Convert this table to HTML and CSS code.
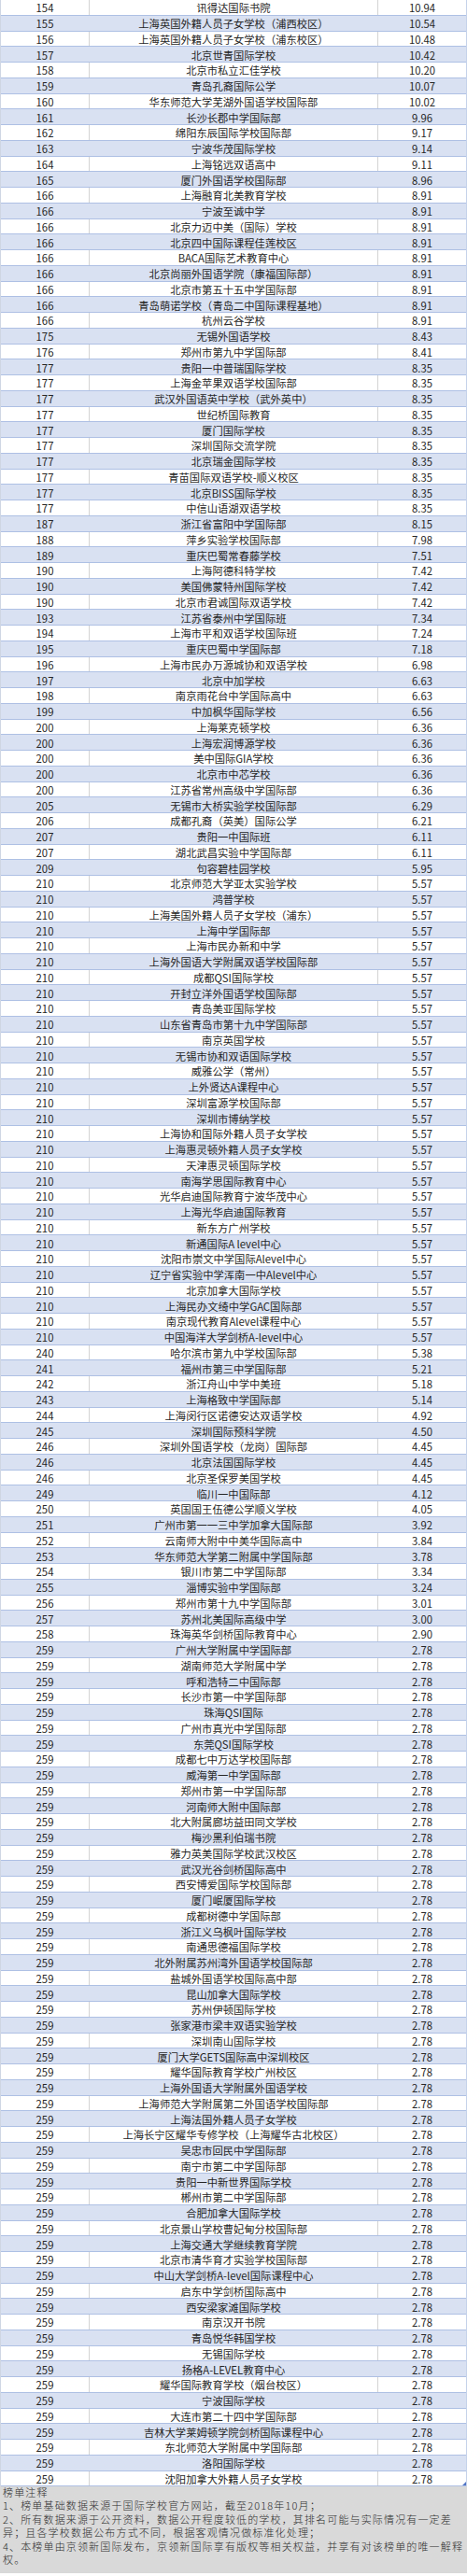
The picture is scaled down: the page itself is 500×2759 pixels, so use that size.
FILE: index.html
```html
<!DOCTYPE html>
<html lang="zh-CN">
<head>
<meta charset="utf-8">
<title>国际学校排名</title>
<link rel="stylesheet" href="styles.css">
</head>
<body>
<div class="board">
<div class="rank-table">
<div class="r"><span>154</span><span>讯得达国际书院</span><span>10.94</span></div>
<div class="r"><span>155</span><span>上海英国外籍人员子女学校（浦西校区）</span><span>10.54</span></div>
<div class="r"><span>156</span><span>上海英国外籍人员子女学校（浦东校区）</span><span>10.48</span></div>
<div class="r"><span>157</span><span>北京世青国际学校</span><span>10.42</span></div>
<div class="r"><span>158</span><span>北京市私立汇佳学校</span><span>10.20</span></div>
<div class="r"><span>159</span><span>青岛孔裔国际公学</span><span>10.07</span></div>
<div class="r"><span>160</span><span>华东师范大学芜湖外国语学校国际部</span><span>10.02</span></div>
<div class="r"><span>161</span><span>长沙长郡中学国际部</span><span>9.96</span></div>
<div class="r"><span>162</span><span>绵阳东辰国际学校国际部</span><span>9.17</span></div>
<div class="r"><span>163</span><span>宁波华茂国际学校</span><span>9.14</span></div>
<div class="r"><span>164</span><span>上海铭远双语高中</span><span>9.11</span></div>
<div class="r"><span>165</span><span>厦门外国语学校国际部</span><span>8.96</span></div>
<div class="r"><span>166</span><span>上海融育北美教育学校</span><span>8.91</span></div>
<div class="r"><span>166</span><span>宁波至诚中学</span><span>8.91</span></div>
<div class="r"><span>166</span><span>北京力迈中美（国际）学校</span><span>8.91</span></div>
<div class="r"><span>166</span><span>北京四中国际课程佳莲校区</span><span>8.91</span></div>
<div class="r"><span>166</span><span>BACA国际艺术教育中心</span><span>8.91</span></div>
<div class="r"><span>166</span><span>北京尚丽外国语学院（康福国际部）</span><span>8.91</span></div>
<div class="r"><span>166</span><span>北京市第五十五中学国际部</span><span>8.91</span></div>
<div class="r"><span>166</span><span>青岛萌诺学校（青岛二中国际课程基地）</span><span>8.91</span></div>
<div class="r"><span>166</span><span>杭州云谷学校</span><span>8.91</span></div>
<div class="r"><span>175</span><span>无锡外国语学校</span><span>8.43</span></div>
<div class="r"><span>176</span><span>郑州市第九中学国际部</span><span>8.41</span></div>
<div class="r"><span>177</span><span>贵阳一中普瑞国际学校</span><span>8.35</span></div>
<div class="r"><span>177</span><span>上海金苹果双语学校国际部</span><span>8.35</span></div>
<div class="r"><span>177</span><span>武汉外国语英中学校（武外英中）</span><span>8.35</span></div>
<div class="r"><span>177</span><span>世纪桥国际教育</span><span>8.35</span></div>
<div class="r"><span>177</span><span>厦门国际学校</span><span>8.35</span></div>
<div class="r"><span>177</span><span>深圳国际交流学院</span><span>8.35</span></div>
<div class="r"><span>177</span><span>北京瑞金国际学校</span><span>8.35</span></div>
<div class="r"><span>177</span><span>青苗国际双语学校-顺义校区</span><span>8.35</span></div>
<div class="r"><span>177</span><span>北京BISS国际学校</span><span>8.35</span></div>
<div class="r"><span>177</span><span>中信山语湖双语学校</span><span>8.35</span></div>
<div class="r"><span>187</span><span>浙江省富阳中学国际部</span><span>8.15</span></div>
<div class="r"><span>188</span><span>萍乡实验学校国际部</span><span>7.98</span></div>
<div class="r"><span>189</span><span>重庆巴蜀常春藤学校</span><span>7.51</span></div>
<div class="r"><span>190</span><span>上海阿德科特学校</span><span>7.42</span></div>
<div class="r"><span>190</span><span>美国佛蒙特州国际学校</span><span>7.42</span></div>
<div class="r"><span>190</span><span>北京市君诚国际双语学校</span><span>7.42</span></div>
<div class="r"><span>193</span><span>江苏省泰州中学国际班</span><span>7.34</span></div>
<div class="r"><span>194</span><span>上海市平和双语学校国际班</span><span>7.24</span></div>
<div class="r"><span>195</span><span>重庆巴蜀中学国际部</span><span>7.18</span></div>
<div class="r"><span>196</span><span>上海市民办万源城协和双语学校</span><span>6.98</span></div>
<div class="r"><span>197</span><span>北京中加学校</span><span>6.63</span></div>
<div class="r"><span>198</span><span>南京雨花台中学国际高中</span><span>6.63</span></div>
<div class="r"><span>199</span><span>中加枫华国际学校</span><span>6.56</span></div>
<div class="r"><span>200</span><span>上海莱克顿学校</span><span>6.36</span></div>
<div class="r"><span>200</span><span>上海宏润博源学校</span><span>6.36</span></div>
<div class="r"><span>200</span><span>美中国际GIA学校</span><span>6.36</span></div>
<div class="r"><span>200</span><span>北京市中芯学校</span><span>6.36</span></div>
<div class="r"><span>200</span><span>江苏省常州高级中学国际部</span><span>6.36</span></div>
<div class="r"><span>205</span><span>无锡市大桥实验学校国际部</span><span>6.29</span></div>
<div class="r"><span>206</span><span>成都孔裔（英美）国际公学</span><span>6.21</span></div>
<div class="r"><span>207</span><span>贵阳一中国际班</span><span>6.11</span></div>
<div class="r"><span>207</span><span>湖北武昌实验中学国际部</span><span>6.11</span></div>
<div class="r"><span>209</span><span>句容碧桂园学校</span><span>5.95</span></div>
<div class="r"><span>210</span><span>北京师范大学亚太实验学校</span><span>5.57</span></div>
<div class="r"><span>210</span><span>鸿普学校</span><span>5.57</span></div>
<div class="r"><span>210</span><span>上海美国外籍人员子女学校（浦东）</span><span>5.57</span></div>
<div class="r"><span>210</span><span>上海中学国际部</span><span>5.57</span></div>
<div class="r"><span>210</span><span>上海市民办新和中学</span><span>5.57</span></div>
<div class="r"><span>210</span><span>上海外国语大学附属双语学校国际部</span><span>5.57</span></div>
<div class="r"><span>210</span><span>成都QSI国际学校</span><span>5.57</span></div>
<div class="r"><span>210</span><span>开封立洋外国语学校国际部</span><span>5.57</span></div>
<div class="r"><span>210</span><span>青岛美亚国际学校</span><span>5.57</span></div>
<div class="r"><span>210</span><span>山东省青岛市第十九中学国际部</span><span>5.57</span></div>
<div class="r"><span>210</span><span>南京英国学校</span><span>5.57</span></div>
<div class="r"><span>210</span><span>无锡市协和双语国际学校</span><span>5.57</span></div>
<div class="r"><span>210</span><span>威雅公学（常州）</span><span>5.57</span></div>
<div class="r"><span>210</span><span>上外贤达A课程中心</span><span>5.57</span></div>
<div class="r"><span>210</span><span>深圳富源学校国际部</span><span>5.57</span></div>
<div class="r"><span>210</span><span>深圳市博纳学校</span><span>5.57</span></div>
<div class="r"><span>210</span><span>上海协和国际外籍人员子女学校</span><span>5.57</span></div>
<div class="r"><span>210</span><span>上海惠灵顿外籍人员子女学校</span><span>5.57</span></div>
<div class="r"><span>210</span><span>天津惠灵顿国际学校</span><span>5.57</span></div>
<div class="r"><span>210</span><span>南海学思国际教育中心</span><span>5.57</span></div>
<div class="r"><span>210</span><span>光华启迪国际教育宁波华茂中心</span><span>5.57</span></div>
<div class="r"><span>210</span><span>上海光华启迪国际教育</span><span>5.57</span></div>
<div class="r"><span>210</span><span>新东方广州学校</span><span>5.57</span></div>
<div class="r"><span>210</span><span>新通国际A level中心</span><span>5.57</span></div>
<div class="r"><span>210</span><span>沈阳市崇文中学国际Alevel中心</span><span>5.57</span></div>
<div class="r"><span>210</span><span>辽宁省实验中学浑南一中Alevel中心</span><span>5.57</span></div>
<div class="r"><span>210</span><span>北京加拿大国际学校</span><span>5.57</span></div>
<div class="r"><span>210</span><span>上海民办文绮中学GAC国际部</span><span>5.57</span></div>
<div class="r"><span>210</span><span>南京现代教育Alevel课程中心</span><span>5.57</span></div>
<div class="r"><span>210</span><span>中国海洋大学剑桥A-level中心</span><span>5.57</span></div>
<div class="r"><span>240</span><span>哈尔滨市第九中学校国际部</span><span>5.38</span></div>
<div class="r"><span>241</span><span>福州市第三中学国际部</span><span>5.21</span></div>
<div class="r"><span>242</span><span>浙江舟山中学中美班</span><span>5.18</span></div>
<div class="r"><span>243</span><span>上海格致中学国际部</span><span>5.14</span></div>
<div class="r"><span>244</span><span>上海闵行区诺德安达双语学校</span><span>4.92</span></div>
<div class="r"><span>245</span><span>深圳国际预科学院</span><span>4.50</span></div>
<div class="r"><span>246</span><span>深圳外国语学校（龙岗）国际部</span><span>4.45</span></div>
<div class="r"><span>246</span><span>北京法国国际学校</span><span>4.45</span></div>
<div class="r"><span>246</span><span>北京圣保罗美国学校</span><span>4.45</span></div>
<div class="r"><span>249</span><span>临川一中国际部</span><span>4.12</span></div>
<div class="r"><span>250</span><span>英国国王伍德公学顺义学校</span><span>4.05</span></div>
<div class="r"><span>251</span><span>广州市第一一三中学加拿大国际部</span><span>3.92</span></div>
<div class="r"><span>252</span><span>云南师大附中中美华国际高中</span><span>3.84</span></div>
<div class="r"><span>253</span><span>华东师范大学第二附属中学国际部</span><span>3.78</span></div>
<div class="r"><span>254</span><span>银川市第二中学国际部</span><span>3.34</span></div>
<div class="r"><span>255</span><span>淄博实验中学国际部</span><span>3.24</span></div>
<div class="r"><span>256</span><span>郑州市第十九中学国际部</span><span>3.01</span></div>
<div class="r"><span>257</span><span>苏州北美国际高级中学</span><span>3.00</span></div>
<div class="r"><span>258</span><span>珠海英华剑桥国际教育中心</span><span>2.90</span></div>
<div class="r"><span>259</span><span>广州大学附属中学国际部</span><span>2.78</span></div>
<div class="r"><span>259</span><span>湖南师范大学附属中学</span><span>2.78</span></div>
<div class="r"><span>259</span><span>呼和浩特二中国际部</span><span>2.78</span></div>
<div class="r"><span>259</span><span>长沙市第一中学国际部</span><span>2.78</span></div>
<div class="r"><span>259</span><span>珠海QSI国际</span><span>2.78</span></div>
<div class="r"><span>259</span><span>广州市真光中学国际部</span><span>2.78</span></div>
<div class="r"><span>259</span><span>东莞QSI国际学校</span><span>2.78</span></div>
<div class="r"><span>259</span><span>成都七中万达学校国际部</span><span>2.78</span></div>
<div class="r"><span>259</span><span>威海第一中学国际部</span><span>2.78</span></div>
<div class="r"><span>259</span><span>郑州市第一中学国际部</span><span>2.78</span></div>
<div class="r"><span>259</span><span>河南师大附中国际部</span><span>2.78</span></div>
<div class="r"><span>259</span><span>北大附属廊坊益田同文学校</span><span>2.78</span></div>
<div class="r"><span>259</span><span>梅沙黑利伯瑞书院</span><span>2.78</span></div>
<div class="r"><span>259</span><span>雅力英美国际学校武汉校区</span><span>2.78</span></div>
<div class="r"><span>259</span><span>武汉光谷剑桥国际高中</span><span>2.78</span></div>
<div class="r"><span>259</span><span>西安博爱国际学校国际部</span><span>2.78</span></div>
<div class="r"><span>259</span><span>厦门岷厦国际学校</span><span>2.78</span></div>
<div class="r"><span>259</span><span>成都树德中学国际部</span><span>2.78</span></div>
<div class="r"><span>259</span><span>浙江义乌枫叶国际学校</span><span>2.78</span></div>
<div class="r"><span>259</span><span>南通思德福国际学校</span><span>2.78</span></div>
<div class="r"><span>259</span><span>北外附属苏州湾外国语学校国际部</span><span>2.78</span></div>
<div class="r"><span>259</span><span>盐城外国语学校国际高中部</span><span>2.78</span></div>
<div class="r"><span>259</span><span>昆山加拿大国际学校</span><span>2.78</span></div>
<div class="r"><span>259</span><span>苏州伊顿国际学校</span><span>2.78</span></div>
<div class="r"><span>259</span><span>张家港市梁丰双语实验学校</span><span>2.78</span></div>
<div class="r"><span>259</span><span>深圳南山国际学校</span><span>2.78</span></div>
<div class="r"><span>259</span><span>厦门大学GETS国际高中深圳校区</span><span>2.78</span></div>
<div class="r"><span>259</span><span>耀华国际教育学校广州校区</span><span>2.78</span></div>
<div class="r"><span>259</span><span>上海外国语大学附属外国语学校</span><span>2.78</span></div>
<div class="r"><span>259</span><span>上海师范大学附属第二外国语学校国际部</span><span>2.78</span></div>
<div class="r"><span>259</span><span>上海法国外籍人员子女学校</span><span>2.78</span></div>
<div class="r"><span>259</span><span>上海长宁区耀华专修学校（上海耀华古北校区）</span><span>2.78</span></div>
<div class="r"><span>259</span><span>吴忠市回民中学国际部</span><span>2.78</span></div>
<div class="r"><span>259</span><span>南宁市第二中学国际部</span><span>2.78</span></div>
<div class="r"><span>259</span><span>贵阳一中新世界国际学校</span><span>2.78</span></div>
<div class="r"><span>259</span><span>郴州市第二中学国际部</span><span>2.78</span></div>
<div class="r"><span>259</span><span>合肥加拿大国际学校</span><span>2.78</span></div>
<div class="r"><span>259</span><span>北京景山学校曹妃甸分校国际部</span><span>2.78</span></div>
<div class="r"><span>259</span><span>上海交通大学继续教育学院</span><span>2.78</span></div>
<div class="r"><span>259</span><span>北京市清华育才实验学校国际部</span><span>2.78</span></div>
<div class="r"><span>259</span><span>中山大学剑桥A-level国际课程中心</span><span>2.78</span></div>
<div class="r"><span>259</span><span>启东中学剑桥国际高中</span><span>2.78</span></div>
<div class="r"><span>259</span><span>西安梁家滩国际学校</span><span>2.78</span></div>
<div class="r"><span>259</span><span>南京汉开书院</span><span>2.78</span></div>
<div class="r"><span>259</span><span>青岛悦华韩国学校</span><span>2.78</span></div>
<div class="r"><span>259</span><span>无锡国际学校</span><span>2.78</span></div>
<div class="r"><span>259</span><span>扬格A-LEVEL教育中心</span><span>2.78</span></div>
<div class="r"><span>259</span><span>耀华国际教育学校（烟台校区）</span><span>2.78</span></div>
<div class="r"><span>259</span><span>宁波国际学校</span><span>2.78</span></div>
<div class="r"><span>259</span><span>大连市第二十四中学国际部</span><span>2.78</span></div>
<div class="r"><span>259</span><span>吉林大学莱姆顿学院剑桥国际课程中心</span><span>2.78</span></div>
<div class="r"><span>259</span><span>东北师范大学附属中学国际部</span><span>2.78</span></div>
<div class="r"><span>259</span><span>洛阳国际学校</span><span>2.78</span></div>
<div class="r"><span>259</span><span>沈阳加拿大外籍人员子女学校</span><span>2.78</span></div>
</div>
<div class="notes">
<p class="note-title">榜单注释</p>
<p class="note n1">1、榜单基础数据来源于国际学校官方网站，截至2018年10月；</p>
<p class="note n2">2、所有数据来源于公开资料，数据公开程度较低的学校，其排名可能与实际情况有一定差<br>异；且各学校数据公布方式不同，根据客观情况做标准化处理；</p>
<p class="note n4">4、本榜单由京领新国际发布，京领新国际享有版权等相关权益，并享有对该榜单的唯一解释<br>权。</p>
</div>
</div>
</body>
</html>
```
FILE: styles.css
```css
html, body {
  margin: 0;
  padding: 0;
  background: #ffffff;
}
body {
  width: 500px;
  overflow: hidden;
}
.board {
  width: 500px;
}
.rank-table {
  position: relative;
  border-left: 1px solid #cfd6e3;
  border-right: 1px solid #c5d2ea;
  font-family: "Noto Sans CJK SC", "Noto Sans", sans-serif;
  font-size: 11.3px;
  color: #262626;
}
.rank-table::after {
  content: "";
  position: absolute;
  right: 0;
  bottom: 1px;
  width: 0;
  height: 0;
  border-left: 4px solid transparent;
  border-bottom: 4px solid #4f74c4;
}
.r {
  display: grid;
  grid-template-columns: 95px 309px 1fr;
  height: 16.765px;
  box-sizing: border-box;
  border-bottom: 1px solid #aec0e4;
  background: #ffffff;
}
.r:nth-child(even) {
  background: #d9e1f2;
}
.r span {
  display: flex;
  align-items: center;
  justify-content: center;
  padding-top: 1px;
  box-sizing: border-box;
  white-space: nowrap;
  line-height: 14px;
  border-right: 1px solid #d4d4d4;
}
.r:nth-child(even) span {
  border-right-color: transparent;
}
.r span:last-child {
  border-right: none;
}
.notes {
  background: #d9d9d9;
  height: 93px;
  padding-left: 3px;
  box-sizing: border-box;
  font-family: "Noto Sans CJK SC", sans-serif;
  font-weight: 300;
  font-size: 11px;
  letter-spacing: 1.15px;
  color: #2b2b2b;
  white-space: nowrap;
}
.notes p {
  margin: 0;
}
.note-title {
  line-height: 13px;
}
.note {
  line-height: 14.5px;
}
.n1 {
  margin-top: 3px;
}
.n2 {
  margin-top: 0;
}
.n4 {
  margin-top: 2.5px;
  line-height: 14.2px;
}
```
